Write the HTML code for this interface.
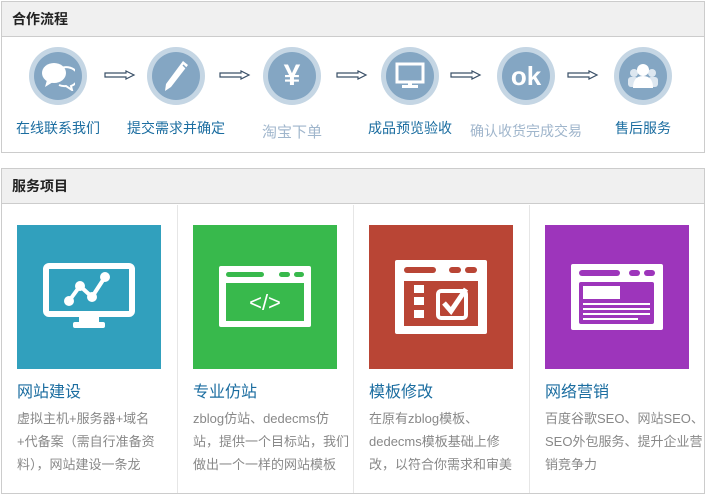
<!DOCTYPE html>
<html><head><meta charset="utf-8"><style>
*{margin:0;padding:0;box-sizing:border-box}
body{width:706px;height:494px;background:#fff;font-family:"Liberation Sans","Noto Sans CJK SC",sans-serif;position:relative;overflow:hidden}
.panel{position:absolute;left:1px;width:704px;border:1px solid #ccc;background:#fff}
.hd{height:35px;background:#f0f0f0;border-bottom:1px solid #ccc;font-size:14px;font-weight:bold;color:#222;line-height:35px;padding-left:10px}
.step{position:absolute;top:47px;width:120px;margin-left:-60px;text-align:center}
.c{width:58px;height:58px;border-radius:50%;background:#c5d6e4;margin:0 auto;position:relative}
.c .in{position:absolute;left:5px;top:5px;width:48px;height:48px;border-radius:50%;background:#84a6c3;display:flex;align-items:center;justify-content:center}
.lbl{position:absolute;top:71px;left:0;width:120px;font-size:14px;color:#1b6da0;white-space:nowrap}
.lt{color:#a0b6cc}
.arr{position:absolute;top:70px}
.col{position:absolute;top:36px;width:176px;height:288px;border-right:1px solid #e6e6e6}
.img{position:absolute;left:15px;top:20px;width:144px;height:144px;display:flex;align-items:center;justify-content:center}
.t{position:absolute;left:15px;top:173px;font-size:16px;color:#1b6da0}
.d{position:absolute;left:15px;top:202px;font-size:13px;color:#888;line-height:23px;white-space:nowrap}
</style></head><body>
<div class="panel" style="top:1px;height:152px">
<div class="hd">合作流程</div>
</div>
<div class="step" style="left:58px"><div class="c"><div class="in">
<svg width="34" height="30" viewBox="0 0 34 30"><ellipse cx="13" cy="12" rx="12" ry="10" fill="#fff"/><path d="M6 19 L4 26 L12 21Z" fill="#fff"/><path d="M20 7 A11 9 0 0 1 30 25 L31 29 L25 25 A11 9 0 0 1 18 24" fill="none" stroke="#fff" stroke-width="2"/></svg>
</div></div><div class="lbl">在线联系我们</div></div>
<div class="step" style="left:176px"><div class="c"><div class="in">
<svg width="30" height="34" viewBox="0 0 30 34"><path d="M22 2 L27 6 L10 28 L4 32 L5 25Z" fill="#fff"/><path d="M22 6 L26 10" stroke="#84a6c3" stroke-width="1.5"/></svg>
</div></div><div class="lbl">提交需求并确定</div></div>
<div class="step" style="left:292px"><div class="c"><div class="in"><span style="color:#fff;font-size:30px;font-weight:bold;line-height:1">¥</span></div></div><div class="lbl lt" style="top:74px;font-size:15px">淘宝下单</div></div>
<div class="step" style="left:410px"><div class="c"><div class="in">
<svg width="30" height="28" viewBox="0 0 30 28"><rect x="2" y="2" width="26" height="18" fill="none" stroke="#fff" stroke-width="3"/><rect x="13" y="20" width="4" height="4" fill="#fff"/><rect x="7" y="23" width="16" height="3" fill="#fff"/></svg>
</div></div><div class="lbl">成品预览验收</div></div>
<div class="step" style="left:526px"><div class="c"><div class="in"><span style="color:#fff;font-size:26px;font-weight:bold;line-height:1">ok</span></div></div><div class="lbl lt" style="top:74px">确认收货完成交易</div></div>
<div class="step" style="left:643px"><div class="c"><div class="in">
<svg width="32" height="28" viewBox="0 0 32 28"><circle cx="7" cy="11" r="4" fill="#dde7f0"/><circle cx="25" cy="11" r="4" fill="#dde7f0"/><rect x="1" y="15" width="10" height="10" rx="3" fill="#dde7f0"/><rect x="21" y="15" width="10" height="10" rx="3" fill="#dde7f0"/><circle cx="16" cy="8" r="6" fill="#fff"/><path d="M6 26 Q6 14 16 14 Q26 14 26 26Z" fill="#fff"/></svg>
</div></div><div class="lbl">售后服务</div></div>
<svg class="arr" style="left:104px" width="32" height="10" viewBox="0 0 32 10"><path d="M1 3 L22 3 L22 1 L30 5 L22 9 L22 7 L1 7Z" fill="none" stroke="#3a5068" stroke-width="1.2"/></svg>
<svg class="arr" style="left:219px" width="32" height="10" viewBox="0 0 32 10"><path d="M1 3 L22 3 L22 1 L30 5 L22 9 L22 7 L1 7Z" fill="none" stroke="#3a5068" stroke-width="1.2"/></svg>
<svg class="arr" style="left:336px" width="32" height="10" viewBox="0 0 32 10"><path d="M1 3 L22 3 L22 1 L30 5 L22 9 L22 7 L1 7Z" fill="none" stroke="#3a5068" stroke-width="1.2"/></svg>
<svg class="arr" style="left:450px" width="32" height="10" viewBox="0 0 32 10"><path d="M1 3 L22 3 L22 1 L30 5 L22 9 L22 7 L1 7Z" fill="none" stroke="#3a5068" stroke-width="1.2"/></svg>
<svg class="arr" style="left:567px" width="32" height="10" viewBox="0 0 32 10"><path d="M1 3 L22 3 L22 1 L30 5 L22 9 L22 7 L1 7Z" fill="none" stroke="#3a5068" stroke-width="1.2"/></svg>

<div class="panel" style="top:168px;height:326px">
<div class="hd">服务项目</div>
<div class="col" style="left:0">
<div class="img" style="background:#31a0bd"><svg width="92" height="68" viewBox="0 0 92 68"><rect x="3" y="3" width="86" height="48" rx="3" fill="none" stroke="#fff" stroke-width="6"/><rect x="36" y="51" width="20" height="9" fill="#fff"/><rect x="30" y="59" width="32" height="6" rx="2" fill="#fff"/><polyline points="26,38 37,23 49,34 62,14" fill="none" stroke="#fff" stroke-width="4"/><circle cx="26" cy="38" r="5" fill="#fff"/><circle cx="37" cy="23" r="5" fill="#fff"/><circle cx="49" cy="34" r="5" fill="#fff"/><circle cx="62" cy="14" r="5" fill="#fff"/></svg></div>
<div class="t">网站建设</div><div class="d">虚拟主机+服务器+域名<br>+代备案（需自行准备资<br>料），网站建设一条龙</div></div>
<div class="col" style="left:176px">
<div class="img" style="background:#38b94c"><svg width="92" height="62" viewBox="0 0 92 62"><rect x="0" y="0" width="92" height="61" rx="2" fill="#fff"/><rect x="7" y="6" width="38" height="5" rx="2.5" fill="#38b94c"/><rect x="60" y="6" width="11" height="5" rx="2.5" fill="#38b94c"/><rect x="75" y="6" width="10" height="5" rx="2.5" fill="#38b94c"/><rect x="7" y="17" width="78" height="38" fill="#38b94c"/><text x="46" y="44" text-anchor="middle" font-family="Liberation Sans" font-size="22" fill="#fff">&lt;/&gt;</text></svg></div>
<div class="t">专业仿站</div><div class="d">zblog仿站、dedecms仿<br>站，提供一个目标站，我们<br>做出一个一样的网站模板</div></div>
<div class="col" style="left:352px">
<div class="img" style="background:#b94535"><svg width="92" height="74" viewBox="0 0 92 74"><rect x="0" y="0" width="92" height="74" rx="2" fill="#fff"/><rect x="9" y="7" width="32" height="6" rx="3" fill="#b94535"/><rect x="54" y="7" width="12" height="6" rx="3" fill="#b94535"/><rect x="70" y="7" width="12" height="6" rx="3" fill="#b94535"/><rect x="9" y="21" width="74" height="45" fill="#b94535"/><rect x="19" y="25" width="10" height="8" fill="#fff"/><rect x="19" y="37" width="10" height="8" fill="#fff"/><rect x="19" y="50" width="10" height="8" fill="#fff"/><rect x="43" y="31" width="28" height="27" rx="3" fill="none" stroke="#fff" stroke-width="4"/><polyline points="49,43 56,51 71,29" fill="none" stroke="#fff" stroke-width="5"/></svg></div>
<div class="t">模板修改</div><div class="d">在原有zblog模板、<br>dedecms模板基础上修<br>改，以符合你需求和审美</div></div>
<div class="col" style="left:528px;border-right:none">
<div class="img" style="background:#9d35bb"><svg width="92" height="66" viewBox="0 0 92 66"><rect x="0" y="0" width="92" height="66" rx="2" fill="#fff"/><rect x="8" y="6" width="41" height="6" rx="3" fill="#9d35bb"/><rect x="58" y="6" width="11" height="6" rx="3" fill="#9d35bb"/><rect x="73" y="6" width="11" height="6" rx="3" fill="#9d35bb"/><rect x="8" y="18" width="75" height="42" rx="2" fill="#9d35bb"/><rect x="12" y="22" width="37" height="13" fill="#fff"/><rect x="12" y="39" width="67" height="2" fill="#fff"/><rect x="12" y="44" width="67" height="2" fill="#fff"/><rect x="12" y="49" width="67" height="2" fill="#fff"/><rect x="12" y="54" width="55" height="2" fill="#fff"/></svg></div>
<div class="t">网络营销</div><div class="d">百度谷歌SEO、网站SEO、<br>SEO外包服务、提升企业营<br>销竞争力</div></div>
</div>
</body></html>
